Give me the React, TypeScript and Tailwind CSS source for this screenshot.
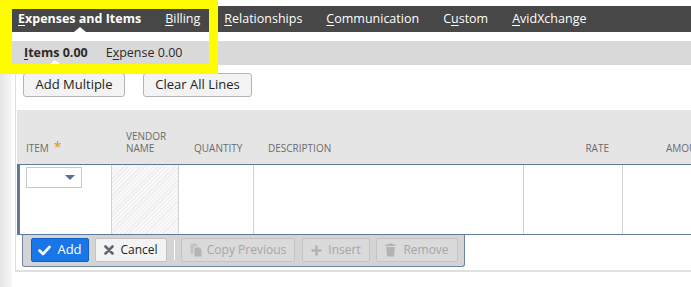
import React from "react"

const tabs = [
  { pre: "", key: "E", rest: "xpenses and Items", active: true },
  { pre: "", key: "B", rest: "illing" },
  { pre: "", key: "R", rest: "elationships" },
  { pre: "", key: "C", rest: "ommunication" },
  { pre: "C", key: "u", rest: "stom" },
  { pre: "", key: "A", rest: "vidXchange" },
]

const CheckIcon = () => (
  <svg width="13" height="11" viewBox="0 0 13 11">
    <path d="M1.5 5.5 L5 9 L11.5 2" fill="none" stroke="#fff" strokeWidth="2.6" strokeLinecap="round" strokeLinejoin="round" />
  </svg>
)

const XIcon = () => (
  <svg width="10" height="10" viewBox="0 0 10 10">
    <path d="M1.5 1.5 L8.5 8.5 M8.5 1.5 L1.5 8.5" stroke="#5f6670" strokeWidth="2.6" strokeLinecap="round" />
  </svg>
)

const CopyIcon = () => (
  <svg width="12" height="14" viewBox="0 0 12 14">
    <path d="M0.5 0.5 H6 L7.5 2 V3.5 H3.5 V11 H0.5 Z" fill="#c2c2c2" />
    <path d="M4.5 4.5 H9.5 L11.5 6.5 V13.5 H4.5 Z" fill="#b3b3b3" />
  </svg>
)

const PlusIcon = () => (
  <svg width="11" height="11" viewBox="0 0 11 11">
    <path d="M5.5 0.5 V10.5 M0.5 5.5 H10.5" stroke="#b3b3b3" strokeWidth="2.6" />
  </svg>
)

const TrashIcon = () => (
  <svg width="11" height="14" viewBox="0 0 11 14">
    <path d="M3.5 0.5 H7.5 V1.5 H10.5 V3 H0.5 V1.5 H3.5 Z" fill="#b3b3b3" />
    <path d="M1.2 4 H9.8 L9 13.5 H2 Z" fill="#b3b3b3" />
  </svg>
)

const Caret = ({ left }: { left: number }) => (
  <span
    className="absolute bottom-0 w-0 h-0 border-x-[6px] border-x-transparent border-b-[5px] border-b-white"
    style={{ left }}
  />
)

export default function App() {
  return (
    <div className="relative w-[691px] h-[287px] overflow-hidden bg-white flex font-['Open_Sans',sans-serif]">
      <div className="w-[12px] shrink-0 bg-gradient-to-r from-[#e6e6e6] to-[#f7f7f7]" />
      <div className="flex-1 flex flex-col pt-[6px] min-w-0">
        {/* main tabs */}
        <div className="relative h-[26px] bg-[#474747] flex items-center pl-[6px] gap-[24px] text-[12.5px] text-white whitespace-nowrap">
          {tabs.map((t, i) => (
            <span key={i} className={t.active ? "font-bold" : ""}>
              {t.pre}
              <span className="underline underline-offset-2">{t.key}</span>
              {t.rest}
            </span>
          ))}
          <Caret left={62} />
        </div>

        {/* sub tabs */}
        <div className="relative mt-[9px] h-[24px] bg-[#d9d9d9] flex items-center pl-[12px] gap-[18px] text-[12.5px] text-[#2b2b2b] whitespace-nowrap">
          <span className="font-bold">
            <span className="underline underline-offset-2">I</span>tems 0.00
          </span>
          <span>
            E<span className="underline underline-offset-2">x</span>pense 0.00
          </span>
          <Caret left={37} />
        </div>

        {/* panel */}
        <div className="ml-[3px] w-[800px] h-[207px] border-l border-b-2 border-[#e0e0e0] flex flex-col pt-[8px]">
          <div className="flex gap-[18px] pl-[7px]">
            <button className="h-[24px] w-[102px] rounded-[3px] border border-[#b5b5b5] bg-[#f3f3f3] text-[13px] font-medium text-[#222]">
              Add Multiple
            </button>
            <button className="h-[24px] w-[109px] rounded-[3px] border border-[#b5b5b5] bg-[#f3f3f3] text-[13px] font-medium text-[#222]">
              Clear All Lines
            </button>
          </div>

          <div className="ml-[1px] mt-[13px] flex flex-col">
            {/* header */}
            <div className="h-[54px] bg-[#e5e5e5] flex items-end pb-[10px] text-[10px] leading-[12px] text-[#6b6b6b] uppercase">
              <div className="w-[95px] pl-[9px] flex items-start">
                Item
                <span className="relative -top-[1px] ml-[5px] text-[#e3901a] text-[14px] leading-[12px]">*</span>
              </div>
              <div className="w-[67px] pl-[14px]">
                Vendor
                <br />
                Name
              </div>
              <div className="w-[75px] pl-[15px]">Quantity</div>
              <div className="w-[270px] pl-[14px]">Description</div>
              <div className="w-[99px] pr-[14px] text-right">Rate</div>
              <div className="pl-[43px]">Amount</div>
            </div>

            {/* editing row */}
            <div className="h-[71px] flex border-t border-b border-l-[3px] border-[#60789b] bg-white">
              <div className="w-[92px] border-r border-[#d3d3d3] pl-[6px] pt-[2px]">
                <div className="w-[56px] h-[21px] border border-[#c9c9c9] bg-white flex items-center justify-end pr-[6px]">
                  <span className="w-0 h-0 border-x-[5px] border-x-transparent border-t-[5px] border-t-[#5a6f93]" />
                </div>
              </div>
              <div className="w-[67px] border-r border-[#d3d3d3] bg-[repeating-linear-gradient(135deg,#ededed_0px,#ededed_1px,#f8f8f8_1px,#f8f8f8_3px)]" />
              <div className="w-[75px] border-r border-[#d3d3d3]" />
              <div className="w-[270px] border-r border-[#d3d3d3]" />
              <div className="w-[99px] border-r border-[#d3d3d3]" />
              <div className="flex-1" />
            </div>

            {/* row actions */}
            <div className="ml-[5px] w-[443px] h-[32px] bg-[#d4d4d4] border-x border-b border-[#6d84a5] rounded-b-[3px] flex items-start pt-[3px] pl-[8px] text-[12px] font-medium">
              <button className="h-[24px] w-[58px] rounded-[2px] border border-[#0f5fc4] bg-[#1876e8] text-white text-[13px] flex items-center justify-center gap-[6px]">
                <CheckIcon />
                Add
              </button>
              <button className="ml-[6px] h-[24px] w-[72px] rounded-[2px] border border-[#c2c2c2] bg-[#f3f3f3] text-[#222] flex items-center justify-center gap-[6px]">
                <XIcon />
                Cancel
              </button>
              <span className="ml-[7px] mt-[2px] w-[1px] h-[20px] bg-white" />
              <button className="ml-[6px] h-[24px] w-[114px] rounded-[2px] border border-[#c4c4c4] bg-[#dadada] text-[#a6a6a6] flex items-center justify-center gap-[5px]">
                <CopyIcon />
                Copy Previous
              </button>
              <button className="ml-[7px] h-[24px] w-[68px] rounded-[2px] border border-[#c4c4c4] bg-[#dadada] text-[#a6a6a6] flex items-center justify-center gap-[6px]">
                <PlusIcon />
                Insert
              </button>
              <button className="ml-[6px] h-[24px] w-[82px] rounded-[2px] border border-[#c4c4c4] bg-[#dadada] text-[#a6a6a6] flex items-center justify-center gap-[7px]">
                <TrashIcon />
                Remove
              </button>
            </div>
          </div>
        </div>
      </div>

      {/* yellow highlight annotation */}
      <div className="absolute left-0 top-0 w-[218px] h-[74px] border-l-[12px] border-t-[9px] border-r-[9px] border-b-[10px] border-[#fffb00] pointer-events-none" />
    </div>
  )
}
